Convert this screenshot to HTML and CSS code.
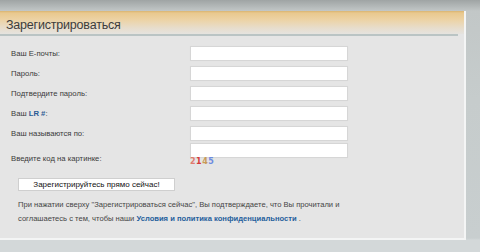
FILE: index.html
```html
<!DOCTYPE html>
<html lang="ru">
<head>
<meta charset="utf-8">
<title>Регистрация</title>
<link rel="stylesheet" href="styles.css">
</head>
<body>
<div class="page">
  <div class="panel">
    <div class="head"><h1 class="title">Зарегистрироваться</h1></div>
    <div class="rule"></div>
    <form class="form">
      <div class="row"><label class="lbl">Ваш E-почты:</label><input class="inp" type="text"></div>
      <div class="row"><label class="lbl">Пароль:</label><input class="inp" type="password"></div>
      <div class="row"><label class="lbl">Подтвердите пароль:</label><input class="inp" type="password"></div>
      <div class="row"><label class="lbl">Ваш <b class="lr">LR #</b>:</label><input class="inp" type="text"></div>
      <div class="row"><label class="lbl">Ваш называются по:</label><input class="inp" type="text"></div>
      <div class="row row-captcha">
        <label class="lbl lbl-captcha">Введите код на картинке:</label>
        <div class="captcha-box">
          <input class="inp" type="text">
          <div class="captcha"><span class="c1">2</span><span class="c2">1</span><span class="c3">4</span><span class="c4">5</span></div>
        </div>
      </div>
      <div class="btn-row"><button class="btn" type="button">Зарегистрируйтесь прямо сейчас!</button></div>
      <p class="note">При нажатии сверху "Зарегистрироваться сейчас", Вы подтверждаете, что Вы прочитали и<br>соглашаетесь с тем, чтобы наши <a class="link" href="#">Условия и политика конфиденциальности</a> .</p>
    </form>
  </div>
</div>
</body>
</html>
```
FILE: styles.css
```css
html, body {
  margin: 0;
  padding: 0;
}
body {
  width: 480px;
  height: 252px;
  overflow: hidden;
  background: linear-gradient(to bottom, #9fa4a4 0px, #c2c7c7 11px, #c6cccc 100px, #c8cecf 238px, #d3d8d9 240px, #d3d8d9 252px);
  font-family: "Liberation Sans", Arial, sans-serif;
}
.page {
  padding-top: 11px;
}
.panel {
  width: 464px;
  height: 227px;
  background: #e5e5e5;
  border-right: 2px solid #f4f5f5;
  border-bottom: 2px solid #f4f5f5;
}
.head {
  height: 23px;
  background: linear-gradient(to bottom, #d9b470 0px, #e9c88e 2px, #ecd3a6 9px, #e7ddcc 17px, #e5e3df 23px);
  display: flex;
  align-items: flex-end;
}
.title {
  margin: 0 0 1px 6px;
  font-family: "Liberation Sans", Arial, sans-serif;
  font-weight: normal;
  font-size: 12.5px;
  line-height: 15px;
  color: #3c3c3c;
  letter-spacing: -0.2px;
}
.rule {
  width: 458px;
  height: 2px;
  background: #bac4c4;
}
.form {
  margin: 0;
  padding-top: 7px;
}
.row {
  display: flex;
  align-items: center;
  height: 20px;
}
.lbl {
  width: 179px;
  padding-left: 11px;
  font-size: 7.7px;
  color: #3a3a3a;
}
.lr {
  color: #2a5a94;
}
.inp {
  box-sizing: border-box;
  width: 158px;
  height: 15px;
  margin: 0;
  padding: 0;
  background: #ffffff;
  border: 1px solid #d6d6d6;
  box-shadow: 0 0 1px #e0e0e0;
  outline: none;
}
.row-captcha {
  height: 30px;
  align-items: flex-start;
}
.lbl-captcha {
  padding-top: 11px;
}
.captcha-box {
  display: flex;
  flex-direction: column;
}
.captcha {
  font-family: "DejaVu Sans", sans-serif;
  font-weight: bold;
  font-size: 8px;
  line-height: 8px;
  letter-spacing: 0.5px;
}
.c1 { color: #e07a6e; }
.c2 { color: #d63a3a; }
.c3 { color: #c89a58; }
.c4 { color: #6d8be0; }
.btn-row {
  padding-left: 18px;
}
.btn {
  box-sizing: border-box;
  width: 157px;
  height: 13px;
  margin: 0;
  padding: 0;
  background: #ffffff;
  border: 1px solid #cfcfcf;
  font-family: "Liberation Sans", Arial, sans-serif;
  font-size: 8px;
  line-height: 11px;
  color: #111111;
}
.note {
  margin: 7px 0 0 18px;
  font-size: 7.6px;
  line-height: 14px;
  color: #444444;
}
.link {
  color: #25609c;
  font-weight: bold;
  text-decoration: none;
}
```
